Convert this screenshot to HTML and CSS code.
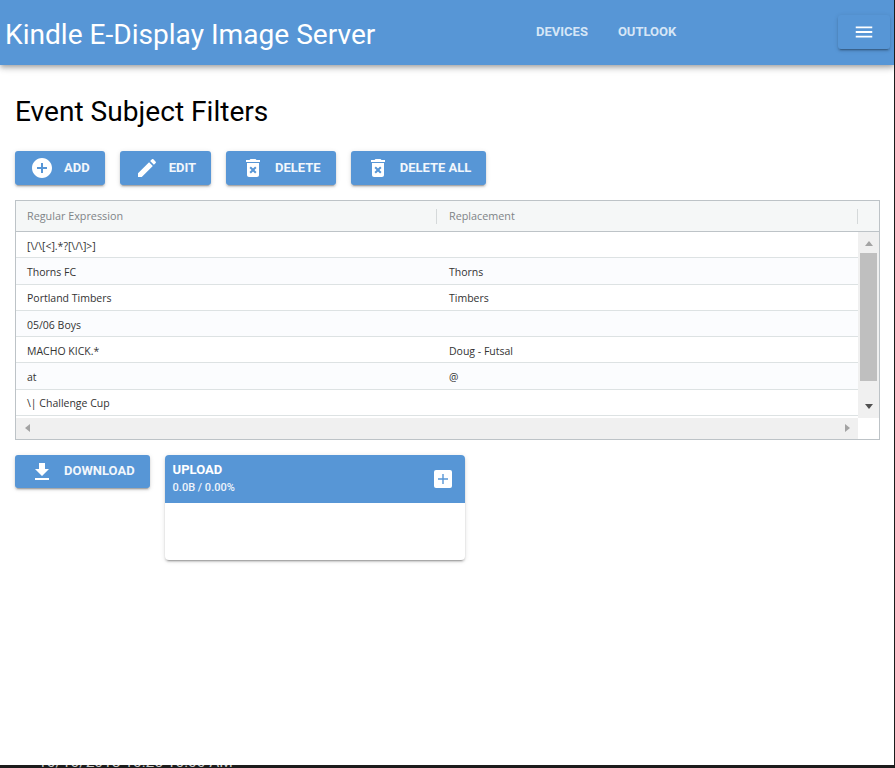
FILE: index.html
```html
<!DOCTYPE html>
<html lang="en">
<head>
    <meta charset="UTF-8">
    <meta name="viewport" content="width=device-width, initial-scale=1.0">
    <title>Kindle E-Display Image Server</title>
    <link rel="stylesheet" href="styles.css">
</head>
<body>
    <header class="toolbar">
        <div class="toolbar-title">Kindle E-Display Image Server</div>
        <nav class="toolbar-nav">
            <a class="nav-link">Devices</a>
            <a class="nav-link">Outlook</a>
        </nav>
        <button class="btn menu-btn" aria-label="Menu">
            <svg class="icon" viewBox="0 0 24 24"><path d="M3 18h18v-2H3v2zm0-5h18v-2H3v2zm0-7v2h18V6H3z"/></svg>
        </button>
    </header>

    <main class="content">
        <h1 class="page-title">Event Subject Filters</h1>

        <div class="actions">
            <button class="btn">
                <svg class="icon" viewBox="0 0 24 24"><path d="M12 2C6.48 2 2 6.48 2 12s4.48 10 10 10 10-4.48 10-10S17.52 2 12 2zm5 11h-4v4h-2v-4H7v-2h4V7h2v4h4v2z"/></svg>
                <span class="btn-label">Add</span>
            </button>
            <button class="btn">
                <svg class="icon" viewBox="0 0 24 24"><path d="M3 17.25V21h3.75L17.81 9.94l-3.75-3.75L3 17.25zM20.71 7.04c.39-.39.39-1.02 0-1.41l-2.34-2.34c-.39-.39-1.02-.39-1.41 0l-1.83 1.83 3.75 3.75 1.83-1.83z"/></svg>
                <span class="btn-label">Edit</span>
            </button>
            <button class="btn">
                <svg class="icon" viewBox="0 0 24 24"><path d="M6 19c0 1.1.9 2 2 2h8c1.1 0 2-.9 2-2V7H6v12zm2.46-7.12l1.41-1.41L12 12.59l2.12-2.12 1.41 1.41L13.41 14l2.12 2.12-1.41 1.41L12 15.41l-2.12 2.12-1.41-1.41L10.59 14l-2.13-2.12zM15.5 4l-1-1h-5l-1 1H5v2h14V4z"/></svg>
                <span class="btn-label">Delete</span>
            </button>
            <button class="btn">
                <svg class="icon" viewBox="0 0 24 24"><path d="M6 19c0 1.1.9 2 2 2h8c1.1 0 2-.9 2-2V7H6v12zm2.46-7.12l1.41-1.41L12 12.59l2.12-2.12 1.41 1.41L13.41 14l2.12 2.12-1.41 1.41L12 15.41l-2.12 2.12-1.41-1.41L10.59 14l-2.13-2.12zM15.5 4l-1-1h-5l-1 1H5v2h14V4z"/></svg>
                <span class="btn-label">Delete All</span>
            </button>
        </div>

        <section class="grid">
            <div class="grid-head">
                <div class="grid-col">Regular Expression</div>
                <div class="grid-col">Replacement</div>
            </div>
            <div class="grid-middle">
                <div class="grid-rows">
                    <div class="grid-row"><div class="grid-cell">[\/\[&lt;].*?[\/\]&gt;]</div><div class="grid-cell"></div></div>
                    <div class="grid-row"><div class="grid-cell">Thorns FC</div><div class="grid-cell">Thorns</div></div>
                    <div class="grid-row"><div class="grid-cell">Portland Timbers</div><div class="grid-cell">Timbers</div></div>
                    <div class="grid-row"><div class="grid-cell">05/06 Boys</div><div class="grid-cell"></div></div>
                    <div class="grid-row"><div class="grid-cell">MACHO KICK.*</div><div class="grid-cell">Doug - Futsal</div></div>
                    <div class="grid-row"><div class="grid-cell">at</div><div class="grid-cell">@</div></div>
                    <div class="grid-row"><div class="grid-cell">\| Challenge Cup</div><div class="grid-cell"></div></div>
                </div>
                <div class="vscroll">
                    <span class="arrow arrow-up"></span>
                    <div class="vscroll-track"><div class="vscroll-thumb"></div></div>
                    <span class="arrow arrow-down"></span>
                </div>
            </div>
            <div class="grid-foot">
                <div class="hscroll">
                    <span class="arrow arrow-left"></span>
                    <span class="arrow arrow-right"></span>
                </div>
                <div class="scroll-corner"></div>
            </div>
        </section>

        <div class="transfer">
            <button class="btn btn-short">
                <svg class="icon" viewBox="0 0 24 24"><path d="M19 9h-4V3H9v6H5l7 7 7-7zM5 18v2h14v-2H5z"/></svg>
                <span class="btn-label">Download</span>
            </button>
            <div class="upload-card">
                <div class="upload-head">
                    <div class="upload-info">
                        <div class="upload-title">Upload</div>
                        <div class="upload-stats">0.0B / 0.00%</div>
                    </div>
                    <span class="upload-add">
                        <svg class="icon-small" viewBox="0 0 18 18"><path d="M8.3 4h1.4v4.3H14v1.4H9.700V14H8.300V9.700H4V8.300h4.300z"/></svg>
                    </span>
                </div>
                <div class="upload-body"></div>
            </div>
        </div>
    </main>

    <footer class="under-strip">
        <span class="under-text">10/10/2018 10:25 10:00 AM</span>
    </footer>
</body>
</html>
```

FILE: styles.css
```css
* {
    box-sizing: border-box;
}
html, body {
    height: 100%;
}
body {
    margin: 0;
    height: 768px;
    overflow: hidden;
    display: flex;
    flex-direction: column;
    border-right: 1px solid #1c1c1c;
    font-family: Roboto, sans-serif;
    background-color: #fff;
    color: #000;
}

/* top bar */
.toolbar {
    height: 65px;
    flex: none;
    display: flex;
    align-items: flex-start;
    padding-left: 5px;
    background-color: #5796d6;
    box-shadow: 0 2px 4px -1px rgba(0, 0, 0, .2), 0 4px 5px 0 rgba(0, 0, 0, .14), 0 1px 10px 0 rgba(0, 0, 0, .12);
    position: relative;
}
.toolbar-title {
    width: 516px;
    padding-top: 18px;
    font-size: 28.1px;
    line-height: 34px;
    color: #fff;
}
.toolbar-nav {
    display: flex;
    gap: 30px;
    padding: 16px 0 0 15px;
}
.nav-link {
    height: 32px;
    font-size: 13px;
    font-weight: 700;
    line-height: 32px;
    text-transform: uppercase;
    color: #d6e6f6;
}
.menu-btn {
    position: absolute;
    top: 15px;
    left: 838px;
    width: 52px;
    height: 34px;
    padding: 0 0 2px;
    justify-content: center;
}

/* buttons */
.btn {
    display: flex;
    align-items: center;
    height: 34px;
    padding: 0 15px;
    border: none;
    border-radius: 3px;
    font-family: Roboto, sans-serif;
    font-size: 13px;
    font-weight: 700;
    text-transform: uppercase;
    color: #f2f7fc;
    background-color: #5796d6;
    box-shadow: 0 2px 2px 0 rgba(0, 0, 0, .14), 0 3px 1px -2px rgba(0, 0, 0, .2), 0 1px 5px 0 rgba(0, 0, 0, .12);
}
.btn-short {
    height: 33px;
}
.btn-label {
    margin-bottom: 2px;
}
.icon {
    width: 24px;
    height: 24px;
    margin-right: 10px;
    fill: #fff;
}
.menu-btn .icon {
    margin-right: 0;
}

.content {
    flex: 1;
    padding: 0 15px;
}
.page-title {
    margin: 30px 0 23px;
    font-size: 28.1px;
    font-weight: 400;
    line-height: 33px;
}
.actions {
    display: flex;
    gap: 15px;
}

/* data grid */
.grid {
    width: 865px;
    height: 240px;
    margin-top: 15px;
    display: flex;
    flex-direction: column;
    border: 1px solid #bdc3c7;
    font-family: "Open Sans", sans-serif;
    font-size: 10.5px;
    color: #333;
}
.grid-head {
    height: 31px;
    flex: none;
    display: flex;
    align-items: center;
    background-color: #f5f7f7;
    border-bottom: 1px solid #bdc3c7;
    font-size: 10.8px;
    color: #7f8487;
}
.grid-col {
    width: 421px;
    height: 15px;
    padding-left: 11px;
    line-height: 13px;
    border-right: 1px solid #d5d9da;
}
.grid-col + .grid-col {
    padding-left: 12px;
}
.grid-middle {
    height: 186px;
    flex: none;
    display: flex;
    overflow: hidden;
}
.grid-rows {
    width: 842px;
}
.grid-row {
    height: 26.3px;
    display: flex;
    align-items: center;
    padding-top: 2px;
    border-bottom: 1px solid #dde2e3;
}
.grid-row:nth-child(even) {
    background-color: #fbfcfe;
}
.grid-cell {
    width: 421px;
    padding-left: 11px;
    padding-right: 10px;
}
.grid-cell + .grid-cell {
    padding-left: 12px;
}

/* fake scrollbars */
.vscroll {
    width: 21px;
    display: flex;
    flex-direction: column;
    align-items: center;
    background-color: #f0f0f0;
    position: relative;
}
.vscroll-track {
    width: 100%;
    padding: 21px 2px 0;
}
.vscroll-thumb {
    height: 128px;
    background-color: #bfbfbf;
}
.arrow {
    position: absolute;
    width: 0;
    height: 0;
    border-style: solid;
    border-color: transparent;
}
.arrow-up {
    top: 9px;
    border-width: 0 4.5px 5px;
    border-bottom-color: #a3a3a3;
}
.arrow-down {
    bottom: 9px;
    border-width: 5px 4.5px 0;
    border-top-color: #505050;
}
.grid-foot {
    flex: 1;
    display: flex;
}
.hscroll {
    width: 842px;
    background-color: #f0f0f0;
    position: relative;
}
.arrow-left {
    top: 6px;
    left: 9px;
    border-width: 4.5px 5px 4.5px 0;
    border-right-color: #a3a3a3;
}
.arrow-right {
    top: 6px;
    right: 8px;
    border-width: 4.5px 0 4.5px 5px;
    border-left-color: #a3a3a3;
}

/* download + upload */
.transfer {
    display: flex;
    align-items: flex-start;
    gap: 15px;
    margin-top: 15px;
}
.upload-card {
    width: 300px;
    height: 105px;
    border-radius: 4px;
    overflow: hidden;
    background-color: #fff;
    box-shadow: 0 2px 2px 0 rgba(0, 0, 0, .14), 0 3px 1px -2px rgba(0, 0, 0, .2), 0 1px 5px 0 rgba(0, 0, 0, .12);
}
.upload-head {
    height: 48px;
    display: flex;
    justify-content: space-between;
    align-items: center;
    padding: 0 13px 0 8px;
    background-color: #5796d6;
    color: #fff;
}
.upload-info {
    padding-bottom: 2px;
}
.upload-title {
    font-size: 13px;
    font-weight: 700;
    line-height: 18px;
    text-transform: uppercase;
}
.upload-stats {
    font-size: 11px;
    font-weight: 500;
    line-height: 17px;
    color: #eef4fb;
}
.upload-add {
    width: 18px;
    height: 18px;
    border-radius: 2px;
    background-color: #fff;
}
.icon-small {
    display: block;
    width: 18px;
    height: 18px;
    fill: #5796d6;
}

/* window behind the page, just peeking through at the bottom */
.under-strip {
    height: 3px;
    flex: none;
    overflow: hidden;
    background-color: #1c1c1c;
    padding-left: 38px;
}
.under-text {
    display: block;
    margin-top: -11px;
    font-size: 15.5px;
    line-height: 16px;
    color: #c8c8c8;
}
```
